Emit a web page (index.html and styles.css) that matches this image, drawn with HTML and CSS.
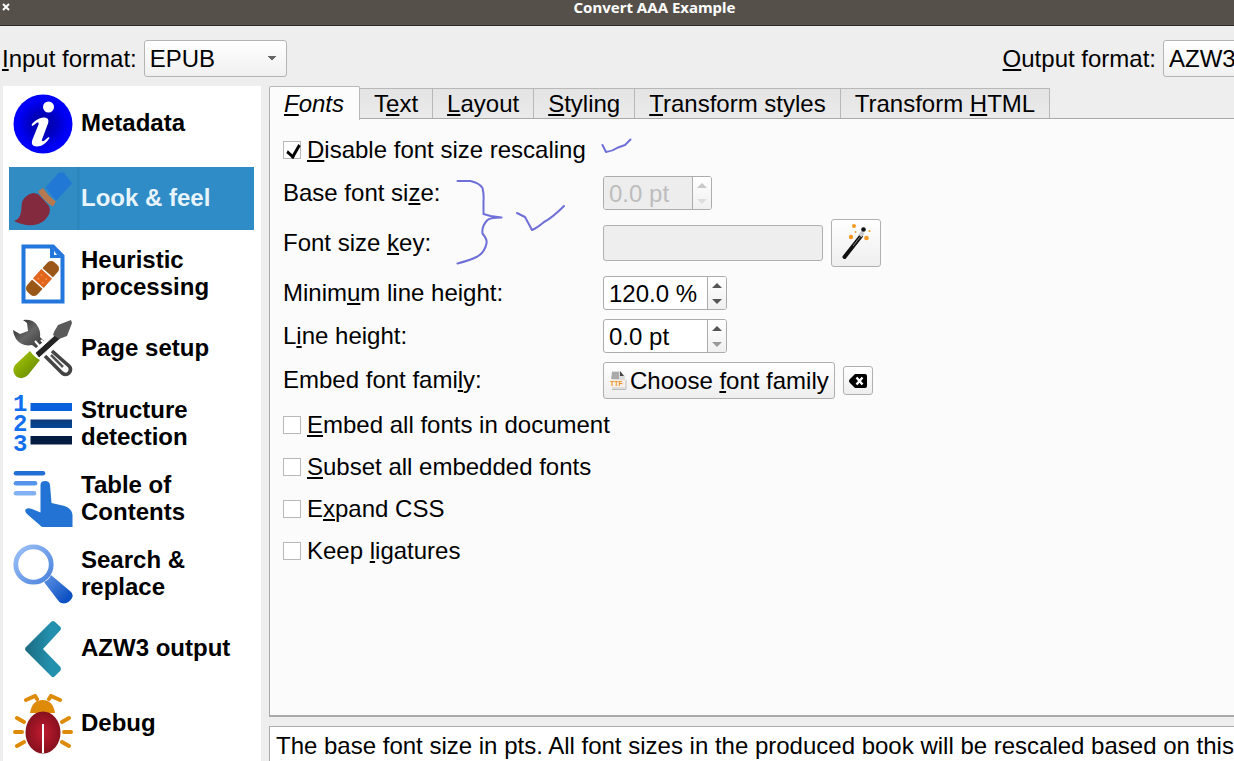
FILE: index.html
```html
<!DOCTYPE html>
<html lang="en">
<head>
<meta charset="utf-8">
<title>Convert AAA Example</title>
<link rel="stylesheet" href="styles.css">
</head>
<body>
<header class="titlebar">
  <button class="close" type="button" aria-label="Close"><svg width="8" height="8" viewBox="0 0 8 8"><path d="M1 1l6 6M7 1l-6 6" stroke="#fff" stroke-width="2"/></svg></button>
  <h1 class="title">Convert AAA Example</h1>
</header>
<div class="formats">
  <div class="format">
    <label for="in"><u>I</u>nput format:</label>
    <select id="in" class="combo"><option>EPUB</option></select>
  </div>
  <div class="format format-out">
    <label for="out"><u>O</u>utput format:</label>
    <select id="out" class="combo"><option>AZW3</option></select>
  </div>
</div>
<main class="main">
  <nav class="sidebar">
    <a class="item" href="#metadata">
      <svg class="icon" viewBox="0 0 60 60"><defs><radialGradient id="gi"><stop offset="0" stop-color="#0000a0"/><stop offset=".45" stop-color="#0000c4"/><stop offset=".85" stop-color="#0000fa"/></radialGradient></defs><circle cx="30" cy="30" r="29.500" fill="url(#gi)"/><circle cx="35.500" cy="13" r="5.500" fill="#fff"/><path d="M18.500 31c1-3 8-8 13-7.500 4 .5 4.500 3 3.500 6l-6 16c-.5 2 1 2 2.500 1l4-3.500 1 1c-3 5-8 8.500-12.500 8.500-5 0-6-3-4.500-7l6-15c.5-2-.5-2.500-2-1.500l-4 3z" fill="#fff"/></svg>
      <span>Metadata</span></a>
    <a class="item selected" href="#look">
      <svg class="icon" viewBox="0 0 60 60"><path d="M46 3.500h5l8 11L43 32 32.500 18.500z" fill="#2279d5"/><path d="M25 22.500l5-3.500q6 9 13 13.500l-3 5q-9-5-15-15z" fill="#b87950"/><path d="M20 24q-8 2-11 9l-1 10q-1 7-7 9 9 5 20 4 9-1 14-9 3-5 1-10-6-7-11-12z" fill="#842a3e"/></svg>
      <span>Look &amp; feel</span></a>
    <a class="item" href="#heuristic">
      <svg class="icon" viewBox="0 0 60 60"><path d="M10.500 2.500H40L49.500 12v45.500h-39z" fill="#fff" stroke="#2376dc" stroke-width="4"/><path d="M37 2v12h12z" fill="#2376dc"/><path d="M41 7v4h3z" fill="#fff"/><g transform="translate(29.500 34.500) rotate(-48)"><rect x="-20" y="-7" width="40" height="14" rx="5" fill="#9a5717"/><path d="M-7-7H7V7H-7z" fill="#e3641b"/><path d="M-7-8V8M7-8V8" stroke="#fff" stroke-width="1.500"/><path d="M-3-3h.1M2-3h.1M-3 3h.1M2 3h.1" stroke="#f08a48" stroke-width="2" stroke-linecap="round"/></g></svg>
      <span>Heuristic processing</span></a>
    <a class="item" href="#page">
      <svg class="icon" viewBox="0 0 60 60"><defs><linearGradient id="gw" x2="1" y2="1"><stop stop-color="#222"/><stop offset=".5" stop-color="#666"/><stop offset="1" stop-color="#333"/></linearGradient><linearGradient id="gg" x2="1" y2="1"><stop stop-color="#adce00"/><stop offset="1" stop-color="#5d8005"/></linearGradient></defs><path d="M10 1q10-1 14 5 4 6 3 12l4 4-8 7-4-3Q9 28 3 20 0 15 0 11l7 4 8-3-1-8z" fill="url(#gw)"/><path d="M22 22l7 8M28 21l6 6" stroke="#fff" stroke-width="2"/><path d="M32 37l17 17q4 3 7 0 3-4 0-7L39 32" fill="none" stroke="#444" stroke-width="3.600"/><path d="M38 36l12 12" stroke="#555" stroke-width="2.500"/><path d="M22 34L43 15l5 4-22 20z" fill="#242424" stroke="#fff" stroke-width="1"/><path d="M41 13l4-7L58 1l1 3-5 13-8 3-6-4z" fill="#5a5a5a"/><path d="M17 32q4 6 10 9L15 56q-5 5-11 2-6-5-2-12z" fill="url(#gg)"/></svg>
      <span>Page setup</span></a>
    <a class="item" href="#structure">
      <svg class="icon" viewBox="0 0 60 60"><text class="digit" x="0" y="17">1</text><text class="digit" x="0" y="37">2</text><text class="digit" x="0" y="57">3</text><defs><linearGradient id="gb" x2="0" y2="1"><stop stop-color="#0b3a7a"/><stop offset="1" stop-color="#044696"/></linearGradient></defs><path d="M17.500 9H59v8H17.500z" fill="#0860dc"/><path d="M17.500 25.500H59v8.500H17.500z" fill="url(#gb)"/><path d="M17.500 42H59v8.500H17.500z" fill="#031c40"/></svg>
      <span>Structure detection</span></a>
    <a class="item" href="#toc">
      <svg class="icon" viewBox="0 0 60 60"><g stroke-width="4.600" stroke-linecap="round"><path d="M3 4.300h27" stroke="#246fd5"/><path d="M3 14.300h19" stroke="#5594ec"/><path d="M3 24.300h18" stroke="#82b1f3"/></g><path d="M27.500 16q0-4 4.500-4t5 4l1.500 18 11 2.500Q59 39 59.500 46v12H29L14 45q-3-3-1-5 2-1.500 6 0l8.500 3.500z" fill="#2373d4"/></svg>
      <span>Table of Contents</span></a>
    <a class="item" href="#search">
      <svg class="icon" viewBox="0 0 60 60"><defs><linearGradient id="gs" gradientUnits="userSpaceOnUse" x1="5" y1="5" x2="55" y2="55"><stop stop-color="#98bdf5"/><stop offset=".6" stop-color="#5188de"/><stop offset="1" stop-color="#0b4fc2"/></linearGradient></defs><circle cx="20.500" cy="20.500" r="17.700" fill="none" stroke="url(#gs)" stroke-width="4.800"/><path d="M38 31l19 16q4 3 2 7-4 7-11 5-2-1-4-4L31 38q5-2 7-7z" fill="url(#gs)"/></svg>
      <span>Search &amp; replace</span></a>
    <a class="item" href="#azw3">
      <svg class="icon" viewBox="0 0 60 60"><defs><linearGradient id="ga" x2="1"><stop stop-color="#1d6a80"/><stop offset=".7" stop-color="#2390ad"/></linearGradient></defs><path d="M38.500 2.500q1.500-1 3 0l6 5.500q1 2 0 3L30 30l17.500 18q1 2 0 3.500l-6 6q-1.500 1-3 0L12.500 31.500q-1-1.500 0-3z" fill="url(#ga)"/></svg>
      <span>AZW3 output</span></a>
    <a class="item" href="#debug">
      <svg class="icon" viewBox="0 0 60 60"><defs><radialGradient id="gd"><stop stop-color="#c21a30"/><stop offset="1" stop-color="#86111e"/></radialGradient></defs><path d="M13 6l9-4 2 3M47 6l-9-4-2 3M4 24l7 4M2 38h7M4 52l7-4M56 24l-7 4M58 38h-7M56 52l-7-4" fill="none" stroke="#df8b0a" stroke-width="4" stroke-linecap="round"/><path d="M17 19Q19 6 29.500 6T42 19z" fill="#df8b0a"/><ellipse cx="30" cy="38.500" rx="17.500" ry="21" fill="url(#gd)"/><path d="M30 30v29" stroke="#fff" stroke-width="2"/></svg>
      <span>Debug</span></a>
  </nav>
  <section class="content">
    <div class="tabs" role="tablist">
      <button class="tab active" role="tab" type="button"><u>F</u>onts</button>
      <button class="tab" role="tab" type="button">T<u>e</u>xt</button>
      <button class="tab" role="tab" type="button"><u>L</u>ayout</button>
      <button class="tab" role="tab" type="button"><u>S</u>tyling</button>
      <button class="tab" role="tab" type="button"><u>T</u>ransform styles</button>
      <button class="tab" role="tab" type="button">Transform <u>H</u>TML</button>
    </div>
    <form class="panel">
      <label class="check"><input type="checkbox" checked><span><u>D</u>isable font size rescaling</span></label>
      <div class="row">
        <label for="base">Base font si<u>z</u>e:</label>
        <div class="spin spin-small off"><input id="base" value="0.0 pt" disabled><div class="steps"><button type="button" class="up" aria-label="Increase" disabled></button><button type="button" class="down" aria-label="Decrease" disabled></button></div></div>
      </div>
      <div class="row">
        <label for="key">Font size <u>k</u>ey:</label>
        <div class="group"><input id="key" class="key" disabled>
        <button class="btn wand" type="button" aria-label="Font size wizard"><svg width="32" height="40" viewBox="0 0 32 40"><path d="M4.500 34L21 13" stroke="#111" stroke-width="4" stroke-linecap="round"/><path d="M13 23l7-9" stroke="#888" stroke-width="1"/><path d="M20 13l3-4" stroke="#ccc" stroke-width="4"/><circle cx="23.500" cy="6.500" r="2.300" fill="#111"/><g fill="#f49a22"><circle cx="14" cy="3" r="2"/><circle cx="11" cy="14" r="2.200"/><circle cx="26.500" cy="15" r="2.300"/><circle cx="29.500" cy="8" r="1"/><circle cx="15.500" cy="9" r="1"/></g></svg></button></div>
      </div>
      <div class="row">
        <label for="min">Minim<u>u</u>m line height:</label>
        <div class="spin"><input id="min" value="120.0 %"><div class="steps"><button type="button" class="up" aria-label="Increase"></button><button type="button" class="down" aria-label="Decrease"></button></div></div>
      </div>
      <div class="row">
        <label for="line">L<u>i</u>ne height:</label>
        <div class="spin"><input id="line" value="0.0 pt"><div class="steps"><button type="button" class="up" aria-label="Increase"></button><button type="button" class="down" aria-label="Decrease" disabled></button></div></div>
      </div>
      <div class="row">
        <label for="family">Embed font fami<u>l</u>y:</label>
        <div class="group"><button id="family" class="btn choose" type="button"><svg width="18" height="20" viewBox="0 0 18 20"><path d="M3 0h8l5 5v14H3z" fill="#ddd"/><path d="M3 1h7v7H2z" fill="#aaa"/><path d="M11 0l4 5h-4z" fill="#444"/><path d="M1 9h15v7H1z" fill="#f7f1e8"/><text class="ttf" x="1" y="15">TTF</text><path d="M3 18.500h14M17 9v9" stroke="#bbb"/></svg><span>Choose <u>f</u>ont family</span></button>
        <button class="btn clear" type="button" aria-label="Clear"><svg width="18" height="14" viewBox="0 0 18 14"><path d="M6 0h10q2 0 2 2v10q0 2-2 2H6L1 9Q-1 7 1 5z" fill="#000"/><path d="M7.500 3.500l6 7M13.500 3.500l-6 7" stroke="#fff" stroke-width="2.400"/></svg></button></div>
      </div>
      <div class="options">
        <label class="check"><input type="checkbox"><span><u>E</u>mbed all fonts in document</span></label>
        <label class="check"><input type="checkbox"><span><u>S</u>ubset all embedded fonts</span></label>
        <label class="check"><input type="checkbox"><span>E<u>x</u>pand CSS</span></label>
        <label class="check"><input type="checkbox"><span>Keep <u>l</u>igatures</span></label>
      </div>
      <svg class="ink" width="190" height="140" viewBox="450 130 190 140"><path d="M602.500 145l3.500 7q7-1 12-4.500l7-2.500 5.500-5.500M457.500 181h13q9 2 12 7 1.500 6 1 13v13l7 2 11 1.500q-11 0-14 2.500-6 6-5 13.500 5 6 4 10-2 9-9 13-8 4-20 7M517 213l8 4 7 13q5-2 12-8 8-4 20-16"/></svg>
    </form>
    <div class="help">The base font size in pts. All font sizes in the produced book will be rescaled based on this size.</div>
  </section>
</main>
</body>
</html>
```
FILE: styles.css
```css
* { box-sizing: border-box; }
body {
  margin: 0;
  height: 100vh;
  display: flex;
  flex-direction: column;
  overflow: hidden;
  background: #eee;
  color: #000;
  font: 24px/27px "Liberation Sans", Arial, sans-serif;
}
button, input, select { font: inherit; color: inherit; margin: 0; }
u { text-decoration-thickness: 2px; text-underline-offset: 2px; text-decoration-skip-ink: none; }

.titlebar {
  display: flex;
  align-items: flex-start;
  height: 26px;
  background: #56504b;
  border-bottom: 1px solid #2c2926;
}
.close { display: flex; padding: 3px 2px; border: 0; background: none; }
.title {
  flex: 1;
  margin: 0;
  padding-left: 63px;
  text-align: center;
  color: #fff;
  font: bold 15px/14px "Noto Sans", sans-serif;
}

.formats { display: flex; justify-content: space-between; padding: 14px 0 9px 2px; }
.format { display: flex; align-items: center; gap: 7px; }
.format-out { margin-right: -72px; }
.combo {
  appearance: none;
  width: 143px;
  height: 37px;
  padding: 0 5px;
  border: 1px solid #b4b4b4;
  border-radius: 3px;
  background:
    linear-gradient(to bottom right, #666 50%, transparent 50%) 127px 15px / 5px 5px no-repeat,
    linear-gradient(to bottom left, #666 50%, transparent 50%) 122px 15px / 5px 5px no-repeat,
    linear-gradient(#fff, #f0f0f0);
}

.main { flex: 1; min-height: 0; display: grid; grid-template-columns: 258px minmax(0, 1fr); gap: 8px; padding-left: 3px; }
.sidebar { display: flex; flex-direction: column; gap: 12px; padding: 6px 7px 0 6px; background: #fff; overflow: hidden; }
.item {
  display: flex;
  flex: none;
  align-items: center;
  gap: 8px;
  height: 63px;
  padding: 0 4px;
  color: #000;
  font-weight: bold;
  text-decoration: none;
}
.item span { flex: 1; padding-bottom: 2px; }
.selected { background: linear-gradient(90deg, #308cc2 68px, #2a84ba 68px, #308cc6 72px); color: #e8f4fc; }
.icon { flex: none; width: 60px; height: 60px; }
.digit { font: bold 24px "Liberation Mono", monospace; fill: #1270ee; }

.content { display: flex; flex-direction: column; min-width: 0; }
.tabs { display: flex; align-items: flex-end; height: 33px; flex: none; }
.tab {
  height: 31px;
  padding: 0 14px;
  border: 1px solid #b8b8b8;
  border-left: 0;
  background: linear-gradient(#e4e4e4, #eaeaea);
}
.tab.active {
  position: relative;
  z-index: 1;
  height: 34px;
  margin-bottom: -1px;
  padding: 0 15px 0 14px;
  border-left: 1px solid #b0b0b0;
  border-bottom: 0;
  border-radius: 2px 2px 0 0;
  background: #fcfcfc;
  font-style: italic;
}
.panel {
  position: relative;
  display: flex;
  flex: 1;
  flex-direction: column;
  gap: 9px;
  margin: -1px 0 0;
  padding: 14px 13px;
  border: 1px solid #a8aaa8;
  border-width: 1px 0 2px 1px;
  background: #fbfbfb;
}
.check { display: flex; flex: none; align-items: center; gap: 6px; height: 34px; }
.check span, .row > label { padding-bottom: 2px; }
.check input {
  appearance: none;
  width: 18px;
  height: 18px;
  border: 1px solid #b8b8b8;
  background: #fff;
}
.check input:checked::before {
  content: "";
  display: block;
  width: 6px;
  height: 12px;
  margin: 0 5px;
  border: solid #000;
  border-width: 0 3px 3px 0;
  transform: rotate(30deg) skewY(12deg);
}
.options { display: flex; flex-direction: column; gap: 8px; }
.row { display: grid; grid-template-columns: 320px minmax(0, 1fr); align-items: center; }
.group { display: flex; align-items: center; gap: 8px; }
.spin { display: flex; width: 124px; height: 34px; border: 1px solid #acacac; border-radius: 3px; background: #fff; overflow: hidden; }
.spin-small { width: 109px; }
.spin input { flex: 1; min-width: 0; padding: 0 5px; border: 0; background: none; }
.off input { background: #ededed; color: #bdbdbd; }
.steps { display: flex; flex-direction: column; width: 19px; border-left: 1px solid #acacac; background: linear-gradient(#fff, #f0f0f0); }
.up, .down { flex: 1; display: flex; align-items: center; justify-content: center; padding: 0; border: 0; background: none; }
.up::before, .down::before { content: ""; border: 5px solid transparent; border-top-width: 0; border-bottom: 5px solid #555; }
.down::before { border-bottom-width: 0; border-top: 5px solid #555; }
.down:disabled::before { border-top-color: #999; }
.off .up::before { border-bottom-color: #c8c8c8; }
.off .down::before { border-top-color: #ddd; }
.key { width: 220px; height: 36px; border: 1px solid #b0b0b0; border-radius: 3px; background: #eee; }
.btn {
  display: flex;
  align-items: center;
  justify-content: center;
  padding: 0;
  border: 1px solid #b0b0b0;
  border-radius: 3px;
  background: linear-gradient(#fff, #eee);
}
.wand { width: 50px; height: 48px; }
.choose { gap: 3px; height: 37px; padding: 0 5px; }
.clear { width: 30px; height: 29px; }
.ttf { font: bold 7px "Liberation Sans", sans-serif; fill: #e8932a; }
.ink { position: absolute; left: 180px; top: 11px; pointer-events: none; fill: none; stroke: #6f6fd8; stroke-width: 2; stroke-linejoin: round; stroke-linecap: round; }
.help {
  flex: none;
  height: 35px;
  margin-top: 9px;
  padding: 5px 6px;
  border: 1px solid #acacac;
  border-width: 1px 0 0 1px;
  background: #fff;
  white-space: nowrap;
  overflow: hidden;
}
```
